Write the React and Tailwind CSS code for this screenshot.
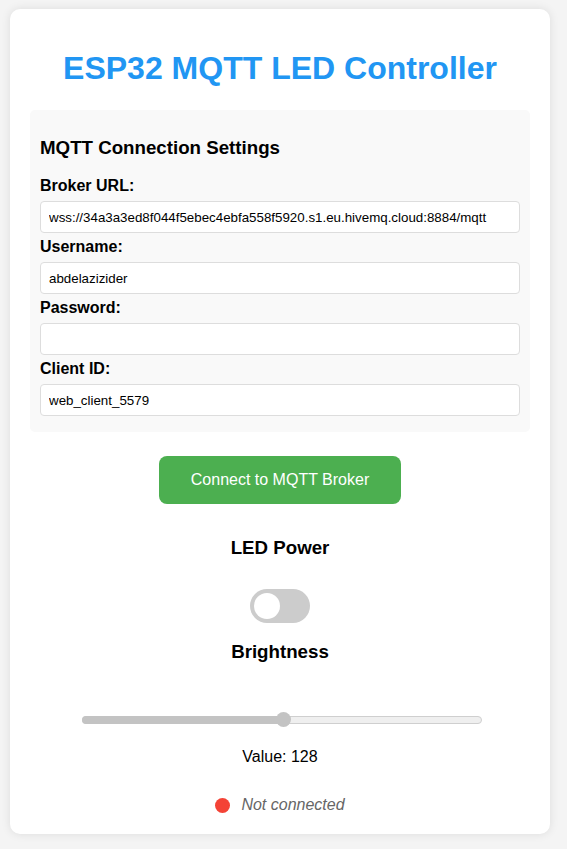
export default function App() {
  const fields = [
    { label: 'Broker URL:', value: 'wss://34a3a3ed8f044f5ebec4ebfa558f5920.s1.eu.hivemq.cloud:8884/mqtt', type: 'text' },
    { label: 'Username:', value: 'abdelazizider', type: 'text' },
    { label: 'Password:', value: '', type: 'password' },
    { label: 'Client ID:', value: 'web_client_5579', type: 'text' },
  ];

  return (
    <div className="min-h-[849px] bg-[#f4f4f4] pt-[9px] pl-[10px] font-['Liberation_Sans',Arial,sans-serif] text-black">
      <div className="w-[540px] rounded-[10px] bg-white px-[20px] pt-[20px] pb-[20px] shadow-[0_0_10px_rgba(0,0,0,0.1)]">
        <h1 className="mt-[21px] mb-[23px] text-center text-[32px] leading-[37px] font-bold text-[#2196F3]">
          ESP32 MQTT LED Controller
        </h1>

        {/* connection settings */}
        <div className="rounded-[5px] bg-[#f9f9f9] px-[10px] pt-[10px] pb-[11px]">
          <h3 className="mt-[17px] mb-[18px] text-[18.72px] leading-[22px] font-bold">MQTT Connection Settings</h3>
          {fields.map((f) => (
            <div key={f.label}>
              <label className="mb-[6px] block text-[16px] leading-[18px] font-bold">{f.label}</label>
              <input
                type={f.type}
                defaultValue={f.value}
                className="mb-[5px] block h-[32px] w-full rounded-[4px] border border-[#ddd] bg-white pl-[8px] text-[13.33px] text-black outline-none"
              />
            </div>
          ))}
        </div>

        <div className="mt-[24px] flex justify-center">
          <button className="h-[48px] w-[242px] rounded-[8px] bg-[#4CAF50] text-[16px] text-white">
            Connect to MQTT Broker
          </button>
        </div>

        <h3 className="mt-[33px] text-center text-[18.72px] leading-[22px] font-bold">LED Power</h3>
        <div className="mt-[30px] flex justify-center">
          <div className="relative h-[34px] w-[60px] rounded-full bg-[#ccc]">
            <div className="absolute top-[4px] left-[4px] h-[26px] w-[26px] rounded-full bg-white" />
          </div>
        </div>

        <h3 className="mt-[18px] text-center text-[18.72px] leading-[22px] font-bold">Brightness</h3>
        <div className="mt-[49px] ml-[52px] flex h-[16px] w-[400px] items-center">
          <div className="relative h-[8px] w-full rounded-full border border-[#cfcfcf] bg-[#efefef]">
            <div className="absolute top-[-1px] left-[-1px] h-[8px] w-[201px] rounded-full bg-[#c3c3c3]" />
            <div className="absolute top-[-5px] left-[193px] h-[15px] w-[15px] rounded-full bg-[#c3c3c3]" />
          </div>
        </div>
        <p className="mt-[20px] text-center text-[16px] leading-[18px]">Value: 128</p>

        <div className="mt-[30px] flex items-center justify-center gap-[11px]">
          <span className="h-[15px] w-[15px] rounded-full bg-[#f44336]" />
          <span className="text-[16px] leading-[18px] text-[#666] italic">Not connected</span>
        </div>
      </div>
    </div>
  );
}
